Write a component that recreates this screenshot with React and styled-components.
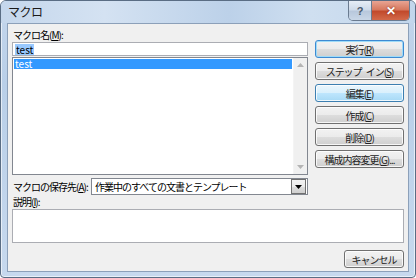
import React from "react";
import styled, { createGlobalStyle } from "styled-components";

const Global = createGlobalStyle`
  html, body {
    margin: 0;
    padding: 0;
    background: #ffffff;
  }
  body {
    font-family: "Noto Sans CJK JP", "Liberation Sans", sans-serif;
    font-size: 10px;
    letter-spacing: -1px;
    color: #000;
  }
`;

const Window = styled.div`
  width: 414px;
  height: 276px;
  border: 1px solid #5a6d84;
  border-radius: 6px 6px 4px 4px;
  background: linear-gradient(180deg, #c4d6ec 0%, #b9cfe8 30%, #c7d9ee 100%);
  display: flex;
  flex-direction: column;
  overflow: hidden;
  box-shadow: inset 0 0 0 1px rgba(255, 255, 255, 0.6);
`;

const TitleBar = styled.div`
  height: 22px;
  display: flex;
  align-items: flex-start;
  justify-content: space-between;
  padding-left: 7px;
  background: linear-gradient(90deg, #c5d7ec 0%, #d4e2f2 25%, #bcd1e9 55%, #cfdff0 75%, #c2d6ec 100%);
`;

const Title = styled.div`
  font-size: 12px;
  line-height: 12px;
  letter-spacing: -0.5px;
  padding-top: 5px;
  color: #1a1a1a;
`;

const Caption = styled.div`
  display: flex;
  margin-right: 5px;
  height: 19px;
  border: 1px solid #6a7b90;
  border-top: none;
  border-radius: 0 0 5px 5px;
  overflow: hidden;
`;

const CapBtn = styled.div`
  width: ${(p) => p.w}px;
  display: flex;
  align-items: center;
  justify-content: center;
  font-family: "Liberation Sans", sans-serif;
  letter-spacing: 0;
  font-weight: bold;
  font-size: ${(p) => (p.close ? 12 : 11)}px;
  color: ${(p) => (p.close ? "#fff" : "#4a5a6c")};
  background: ${(p) =>
    p.close
      ? "linear-gradient(180deg, #e8a493 0%, #d7795f 45%, #c24a2c 55%, #d2694a 100%)"
      : "linear-gradient(180deg, #e6edf6 0%, #cfdbea 45%, #b8c8dc 55%, #c9d7e7 100%)"};
  border-left: ${(p) => (p.close ? "1px solid #6a7b90" : "none")};
  text-shadow: ${(p) => (p.close ? "0 0 2px #7a2010" : "none")};
`;

const Client = styled.div`
  flex: 1;
  margin: 0 6px 5px 6px;
  border: 1px solid #8ca0b9;
  background: #f0f0f0;
  padding: 4px 4px 3px 4px;
  display: flex;
  flex-direction: column;
`;

const Top = styled.div`
  display: flex;
  justify-content: space-between;
`;

const LeftCol = styled.div`
  width: 296px;
  display: flex;
  flex-direction: column;
`;

const Label = styled.div`
  height: 13px;
  line-height: 13px;
  padding-left: 1px;
  margin-bottom: ${(p) => p.mb || 0}px;
  white-space: nowrap;
  flex-shrink: 0;
`;

const Input = styled.div`
  height: 12px;
  border: 1px solid #abadb3;
  background: #fff;
  padding: 0 2px;
  display: flex;
  align-items: center;
`;

const Sel = styled.span`
  background: #99c9ff;
  font-size: 10px;
  line-height: 11px;
  letter-spacing: 0;
  padding: 0 1px;
`;

const List = styled.div`
  height: 116px;
  border: 1px solid #828790;
  background: #fff;
  display: flex;
  margin-top: 1px;
`;

const Items = styled.div`
  flex: 1;
  padding: 1px 1px;
`;

const Item = styled.div`
  height: 10px;
  line-height: 10px;
  letter-spacing: 0;
  padding-left: 1px;
  background: ${(p) => (p.selected ? "#3399ff" : "transparent")};
  color: ${(p) => (p.selected ? "#fff" : "#000")};
`;

const Scroll = styled.div`
  width: 13px;
  background: #f0f0f0;
  border-left: 1px solid #f4f4f4;
  display: flex;
  flex-direction: column;
  justify-content: space-between;
  align-items: center;
  padding: 5px 0 5px;
`;

const RightCol = styled.div`
  width: 89px;
  display: flex;
  flex-direction: column;
  gap: 4px;
  padding-top: 12px;
`;

const Button = styled.div`
  height: 16px;
  border: 1px solid ${(p) => (p.hot ? "#3c7fb1" : p.def ? "#3d8ad2" : "#707070")};
  border-radius: 3px;
  display: flex;
  align-items: center;
  justify-content: center;
  white-space: nowrap;
  color: #222;
  box-shadow: ${(p) =>
    p.def ? "inset 0 0 0 1px #9edbf8" : "inset 0 0 0 1px rgba(255,255,255,0.8)"};
  background: ${(p) =>
    p.hot
      ? "linear-gradient(180deg, #eaf6fd 0%, #d9f0fc 50%, #bee6fd 51%, #a7d9f5 100%)"
      : "linear-gradient(180deg, #f2f2f2 0%, #ebebeb 50%, #dddddd 51%, #cfcfcf 100%)"};
  width: ${(p) => (p.w ? `${p.w}px` : "auto")};
`;

const WordGap = styled.span`
  display: inline-block;
  width: 4px;
`;

const Bottom = styled.div`
  display: flex;
  flex-direction: column;
  margin-top: 3px;
`;

const SaveRow = styled.div`
  width: 296px;
  display: flex;
  align-items: center;
  justify-content: space-between;
`;

const Select = styled.div`
  width: 215px;
  height: 15px;
  border: 1px solid #828790;
  background: #fff;
  display: flex;
  align-items: center;
`;

const SelectText = styled.div`
  flex: 1;
  padding-left: 3px;
  white-space: nowrap;
  overflow: hidden;
`;

const DropBtn = styled.div`
  width: 13px;
  height: 13px;
  margin-right: 1px;
  border: 1px solid #707070;
  background: linear-gradient(180deg, #f2f2f2 0%, #ebebeb 50%, #dddddd 51%, #cfcfcf 100%);
  display: flex;
  align-items: center;
  justify-content: center;
`;

const TextArea = styled.div`
  height: 32px;
  border: 1px solid #abadb3;
  background: #fff;
  margin-top: 1px;
`;

const Footer = styled.div`
  display: flex;
  justify-content: flex-end;
  margin-top: 7px;
`;

const Arrow = ({ up, color = "#a0a0a0" }) => (
  <svg width="7" height="4" viewBox="0 0 7 4">
    <path d={up ? "M0 4 L3.5 0 L7 4 Z" : "M0 0 L7 0 L3.5 4 Z"} fill={color} />
  </svg>
);

const Mn = ({ k }) => (
  <>
    (<u>{k}</u>)
  </>
);

export default function App() {
  return (
    <>
      <Global />
      <Window>
        <TitleBar>
          <Title>マクロ</Title>
          <Caption>
            <CapBtn w={22}>?</CapBtn>
            <CapBtn w={37} close>
              ✕
            </CapBtn>
          </Caption>
        </TitleBar>
        <Client>
          <Top>
            <LeftCol>
              <Label mb={1}>
                マクロ名<Mn k="M" />:
              </Label>
              <Input>
                <Sel>test</Sel>
              </Input>
              <List>
                <Items>
                  <Item selected>test</Item>
                </Items>
                <Scroll>
                  <Arrow up color="#b4b4b4" />
                  <Arrow color="#b4b4b4" />
                </Scroll>
              </List>
            </LeftCol>
            <RightCol>
              <Button def>
                実行<Mn k="R" />
              </Button>
              <Button>
                ステップ<WordGap />イン<Mn k="S" />
              </Button>
              <Button hot>
                編集<Mn k="E" />
              </Button>
              <Button>
                作成<Mn k="C" />
              </Button>
              <Button>
                削除<Mn k="D" />
              </Button>
              <Button>
                構成内容変更<Mn k="G" />...
              </Button>
            </RightCol>
          </Top>
          <Bottom>
            <SaveRow>
              <Label>
                マクロの保存先<Mn k="A" />:
              </Label>
              <Select>
                <SelectText>作業中のすべての文書とテンプレート</SelectText>
                <DropBtn>
                  <Arrow color="#000" />
                </DropBtn>
              </Select>
            </SaveRow>
            <Label>
              説明<Mn k="I" />:
            </Label>
            <TextArea />
            <Footer>
              <Button w={58}>キャンセル</Button>
            </Footer>
          </Bottom>
        </Client>
      </Window>
    </>
  );
}
